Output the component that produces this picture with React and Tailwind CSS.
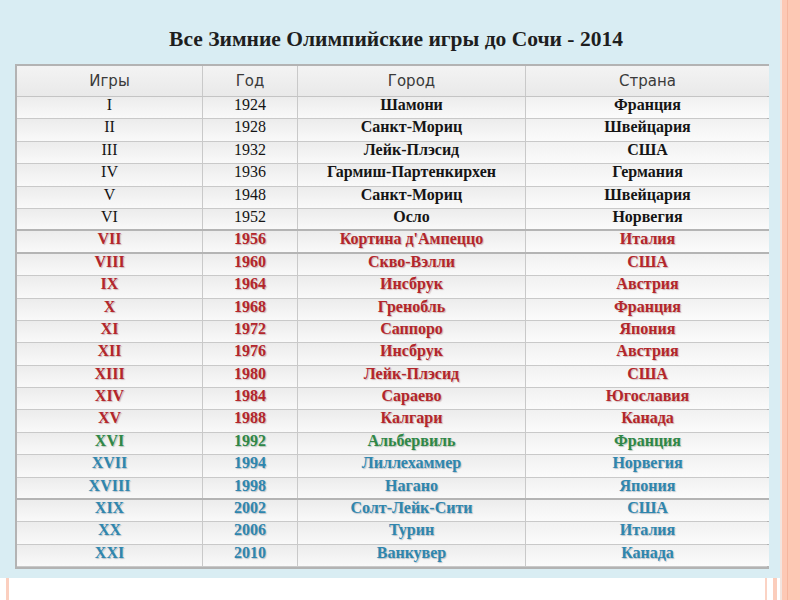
import React from "react";

const rows = [
  ["I", "1924", "Шамони", "Франция", "k"],
  ["II", "1928", "Санкт-Мориц", "Швейцария", "k"],
  ["III", "1932", "Лейк-Плэсид", "США", "k"],
  ["IV", "1936", "Гармиш-Партенкирхен", "Германия", "k"],
  ["V", "1948", "Санкт-Мориц", "Швейцария", "k"],
  ["VI", "1952", "Осло", "Норвегия", "k", true],
  ["VII", "1956", "Кортина д'Ампеццо", "Италия", "r", true],
  ["VIII", "1960", "Скво-Вэлли", "США", "r"],
  ["IX", "1964", "Инсбрук", "Австрия", "r"],
  ["X", "1968", "Гренобль", "Франция", "r"],
  ["XI", "1972", "Саппоро", "Япония", "r"],
  ["XII", "1976", "Инсбрук", "Австрия", "r"],
  ["XIII", "1980", "Лейк-Плэсид", "США", "r"],
  ["XIV", "1984", "Сараево", "Югославия", "r"],
  ["XV", "1988", "Калгари", "Канада", "r"],
  ["XVI", "1992", "Альбервиль", "Франция", "g"],
  ["XVII", "1994", "Лиллехаммер", "Норвегия", "b"],
  ["XVIII", "1998", "Нагано", "Япония", "b", true],
  ["XIX", "2002", "Солт-Лейк-Сити", "США", "b"],
  ["XX", "2006", "Турин", "Италия", "b"],
  ["XXI", "2010", "Ванкувер", "Канада", "b"],
];

const colorCls = {
  k: "text-[#151515]",
  r: "text-[#b3262b] [text-shadow:1px_1px_1px_rgba(90,0,0,0.25)]",
  g: "text-[#2f8747] [text-shadow:1px_1px_1px_rgba(0,60,20,0.25)]",
  b: "text-[#2f86ae] [text-shadow:1px_1px_1px_rgba(0,40,70,0.25)]",
};

function Row({ r }) {
  const [num, year, city, country, c, thick] = r;
  const col = colorCls[c];
  const lightWeight = c === "k" ? "font-normal" : "font-bold";
  const cell =
    "flex justify-center items-start leading-[16px] bg-linear-to-b from-[#ececec] to-[#f9f9f9]";
  return (
    <div
      className={`grid grid-cols-[186px_95px_228px_243px] h-[22.4px] ${
        thick ? "border-b-2 border-[#b4b4b4]" : "border-b border-[#c9c9c9]"
      } text-[16px] ${col}`}
      style={{ fontFamily: '"Liberation Serif", "Times New Roman", serif' }}
    >
      <div className={`${cell} border-r border-[#c9c9c9] ${lightWeight}`}>{num}</div>
      <div className={`${cell} border-r border-[#c9c9c9] ${lightWeight}`}>{year}</div>
      <div className={`${cell} border-r border-[#c9c9c9] font-bold`}>{city}</div>
      <div className={`${cell} font-bold bg-linear-to-b from-[#f1f1f1] to-[#fbfbfb]`}>{country}</div>
    </div>
  );
}

export default function App() {
  const head =
    "flex items-center justify-center text-[15px] text-[#3a3a3a] bg-linear-to-b from-[#f3f3f3] to-[#e9e9e9]";
  return (
    <div className="w-[800px] h-[600px] flex bg-white overflow-hidden">
      <div className="w-[780px] flex flex-col">
        <div className="h-[578px] bg-[#d9edf3] flex flex-col">
          <div
            className="pt-[27px] h-[64px] leading-[25px] text-[21.5px] font-bold text-[#1e1e1e] text-center pl-[12px]"
            style={{ fontFamily: '"Liberation Serif", "Times New Roman", serif' }}
          >
            Все Зимние Олимпийские игры до Сочи - 2014
          </div>
          <div className="ml-[15px] w-[754px] border-2 border-[#b3b3b3] flex flex-col">
            <div
              className="grid grid-cols-[186px_95px_228px_243px] h-[31px] border-b border-[#c4c4c4]"
              style={{ fontFamily: '"DejaVu Sans", Verdana, sans-serif' }}
            >
              <div className={`${head} border-r border-[#c9c9c9]`}>Игры</div>
              <div className={`${head} border-r border-[#c9c9c9]`}>Год</div>
              <div className={`${head} border-r border-[#c9c9c9]`}>Город</div>
              <div className={head}>Страна</div>
            </div>
            {rows.map((r) => (
              <Row key={r[0]} r={r} />
            ))}
          </div>
        </div>
        <div className="flex-1 flex">
          <div className="ml-[6px] w-[3px] bg-[#fbcfbf]" />
          <div className="ml-[756px] w-[2px] bg-[#fbd3c4]" />
          <div className="ml-[6px] w-[4px] bg-[#fbcdbc]" />
        </div>
      </div>
      <div className="w-[2px] bg-[#f2e4de]" />
      <div className="w-[5px] bg-[#fdc8b4]" />
      <div className="w-[1px] bg-[#f5b59e]" />
      <div className="flex-1 bg-[#fdc8b4]" />
    </div>
  );
}
